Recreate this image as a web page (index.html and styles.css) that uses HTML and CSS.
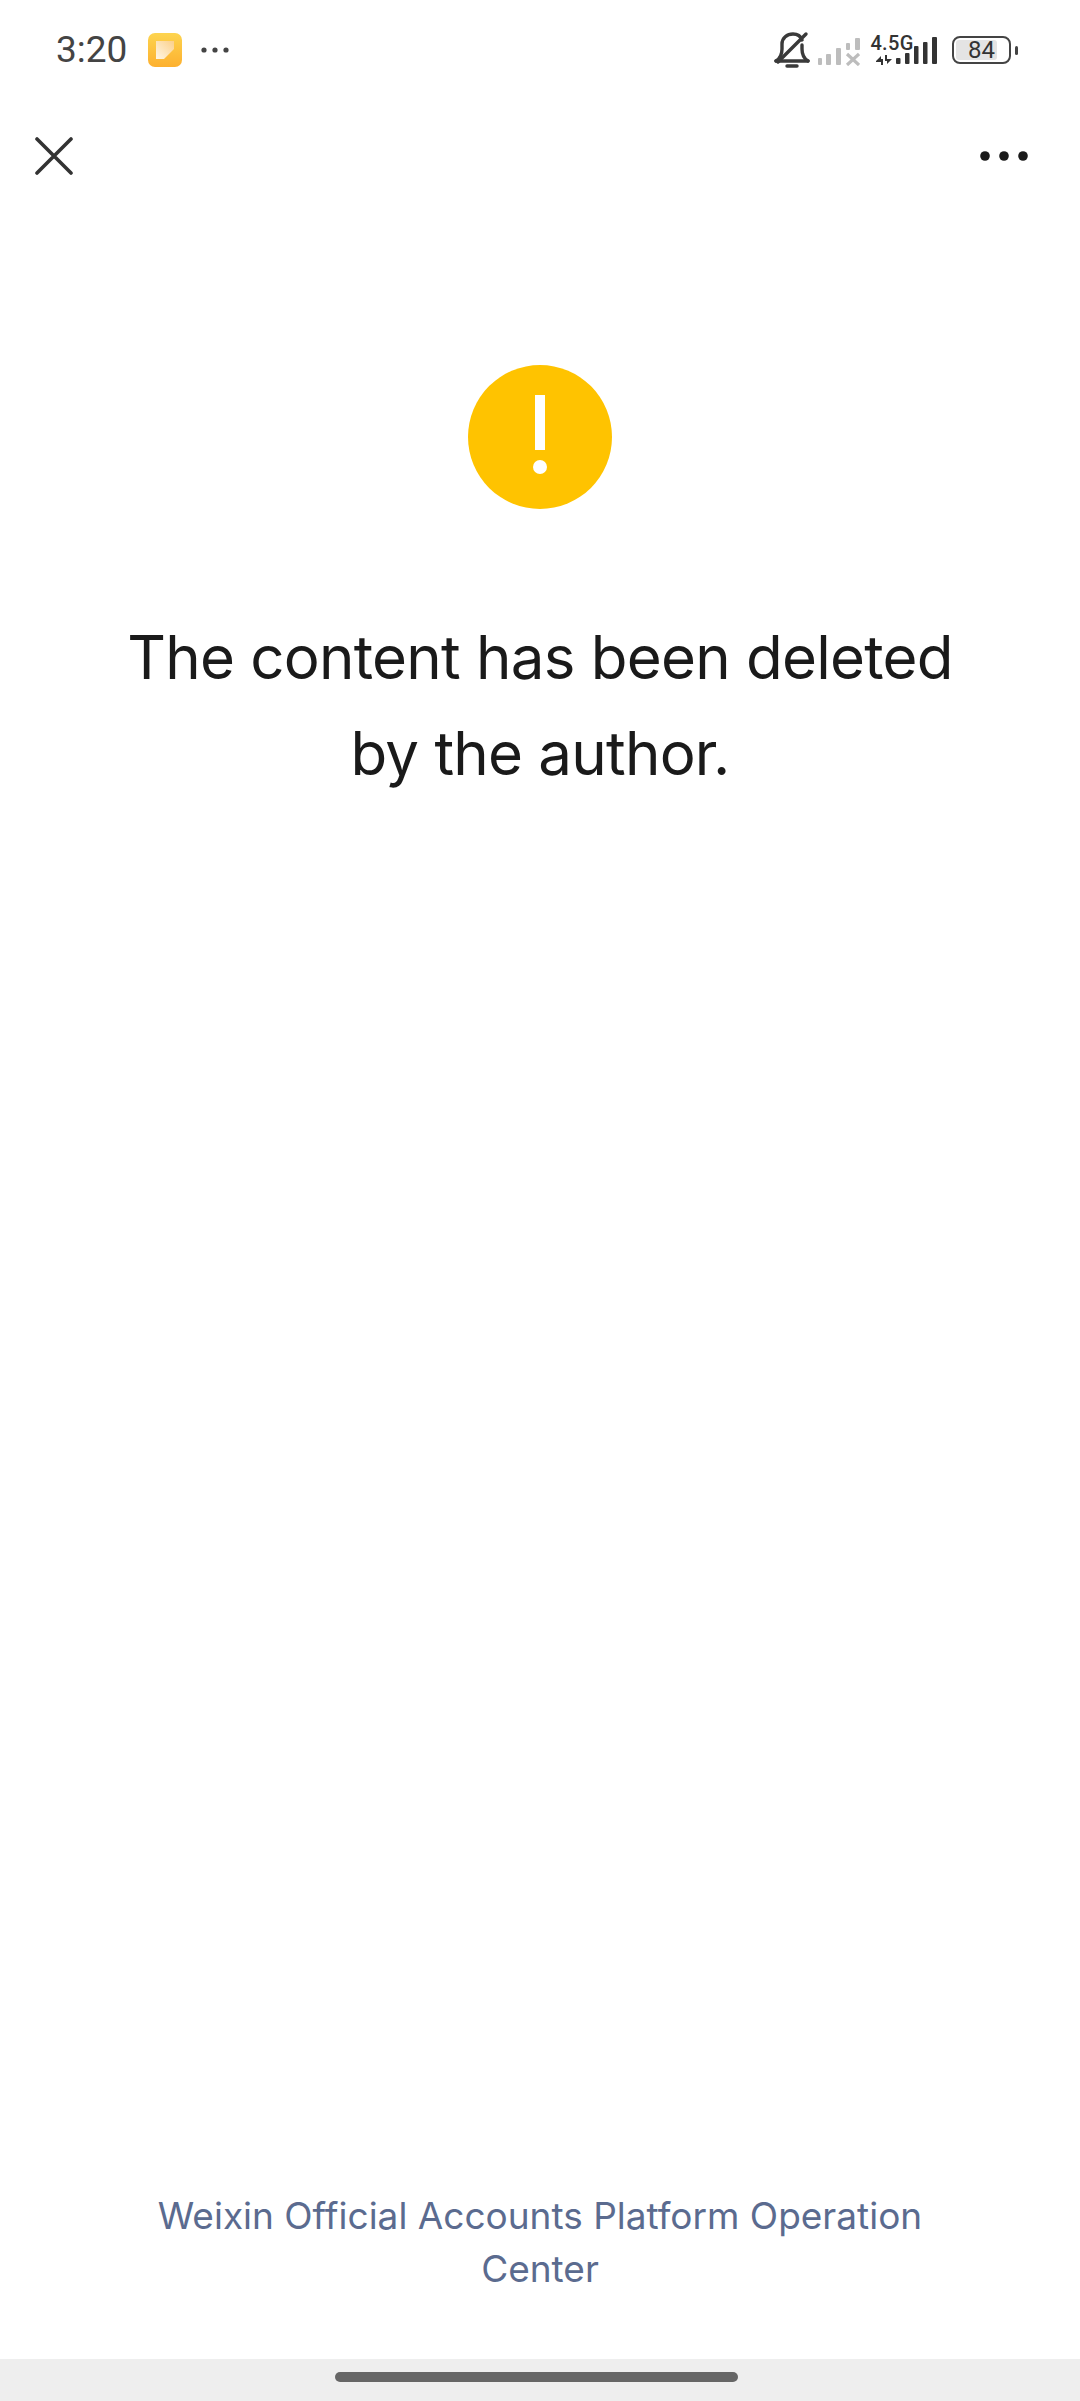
FILE: index.html
```html
<!DOCTYPE html>
<html lang="en">
<head>
<meta charset="utf-8">
<title>Content deleted</title>
<link rel="stylesheet" href="styles.css">
</head>
<body>
<div class="page">
  <header class="status">
    <div class="status-left">
      <span class="time">3:20</span>
      <svg class="app-icon" width="36" height="36" viewBox="0 0 36 36">
        <defs>
          <linearGradient id="appg" x1="0" y1="0" x2="0" y2="1">
            <stop offset="0" stop-color="#fdd44f"/>
            <stop offset="1" stop-color="#fdb02f"/>
          </linearGradient>
          <linearGradient id="noteg" x1="0" y1="1" x2="1" y2="0">
            <stop offset="0" stop-color="#fff6e6"/>
            <stop offset="1" stop-color="#fbd08a"/>
          </linearGradient>
        </defs>
        <rect x="1" y="1" width="34" height="34" rx="7" fill="url(#appg)"/>
        <path d="M9 9H27V17L17 27H9Z" fill="url(#noteg)"/>
      </svg>
      <svg class="more-small" width="28" height="8" viewBox="0 0 28 8">
        <circle cx="3" cy="4" r="2.6"/><circle cx="14" cy="4" r="2.6"/><circle cx="25" cy="4" r="2.6"/>
      </svg>
    </div>
    <div class="status-right">
      <svg class="ic-bell" width="36" height="38" viewBox="0 0 36 38" fill="none" stroke="#3a3a3a" stroke-width="3.4" stroke-linecap="round" stroke-linejoin="round">
        <path d="M2 30H34"/>
        <path d="M2 30C7 27 8 23 8 18V13C8 7 13 3 19 3C24 3 27 6 28 9"/>
        <path d="M28 14V18C28 23 29 27 34 30"/>
        <path d="M4 31L32 3"/>
        <path d="M13 35H23"/>
      </svg>
      <svg class="ic-sig1" width="42" height="28" viewBox="0 0 42 28" fill="#bdbdbd">
        <rect x="0" y="20" width="4" height="7" rx="1"/>
        <rect x="8" y="16" width="5" height="11" rx="1"/>
        <rect x="18" y="10" width="5" height="17" rx="1"/>
        <rect x="28" y="5" width="4" height="7" rx="1"/>
        <rect x="37" y="0" width="5" height="12" rx="1"/>
        <path d="M29 16L41 27M41 16L29 27" stroke="#bdbdbd" stroke-width="3.2" fill="none"/>
      </svg>
      <div class="net">
        <span class="net-label">4.5G</span>
        <svg class="net-arrows" width="16" height="10" viewBox="0 0 16 10" fill="#333">
          <path d="M0 6L5 1V4H7V10H5V7H0Z"/>
          <path d="M9 0H11V4H16L11 9V6H9Z"/>
        </svg>
      </div>
      <svg class="ic-sig2" width="42" height="28" viewBox="0 0 42 28" fill="#333">
        <rect x="0" y="21" width="4.5" height="6" rx="1"/>
        <rect x="9" y="16" width="4.5" height="11" rx="1"/>
        <rect x="18" y="9" width="4.5" height="18" rx="1"/>
        <rect x="27" y="5" width="4.5" height="22" rx="1"/>
        <rect x="36" y="0" width="5" height="27" rx="1"/>
      </svg>
      <div class="battery">
        <div class="battery-body">
          <span class="battery-fill"></span>
          <span class="battery-num">84</span>
        </div>
        <span class="battery-tip"></span>
      </div>
    </div>
  </header>

  <nav class="topnav">
    <svg class="close" width="38" height="38" viewBox="0 0 38 38" fill="none" stroke="#333" stroke-width="3.6" stroke-linecap="round">
      <path d="M2 2L36 36M36 2L2 36"/>
    </svg>
    <svg class="menu" width="48" height="10" viewBox="0 0 48 10" fill="#1a1a1a">
      <circle cx="5" cy="5" r="4.8"/><circle cx="24" cy="5" r="4.8"/><circle cx="43" cy="5" r="4.8"/>
    </svg>
  </nav>

  <main class="content">
    <svg class="warn" width="144" height="144" viewBox="0 0 144 144">
      <circle cx="72" cy="72" r="72" fill="#ffc300"/>
      <rect x="67" y="30" width="10" height="55" fill="#fff"/>
      <circle cx="72" cy="102" r="7" fill="#fff"/>
    </svg>
    <h1 class="title">The content has been deleted by the author.</h1>
  </main>

  <footer class="foot">
    <p class="foot-link">Weixin Official Accounts Platform Operation Center</p>
  </footer>

  <div class="homebar"><span class="home-pill"></span></div>
</div>
</body>
</html>
```

FILE: styles.css
```css
* { box-sizing: border-box; }
html, body { margin: 0; padding: 0; background: #fff; }
.page {
  width: 1080px;
  height: 2401px;
  display: flex;
  flex-direction: column;
  font-family: Inter, "Noto Sans", sans-serif;
  overflow: hidden;
}
.status {
  height: 100px;
  flex: none;
  display: flex;
  align-items: center;
  justify-content: space-between;
  padding: 0 62px 0 56px;
}
.status-left { display: flex; align-items: center; }
.time {
  font-family: Roboto, sans-serif;
  font-size: 37px;
  color: #444;
  line-height: 44px;
  width: 91px;
}
.more-small { fill: #444; margin-left: 18px; }
.status-right { display: flex; align-items: center; }
.ic-bell { margin-right: 8px; }
.ic-sig1 { margin-right: 10px; margin-top: 3px; }
.net {
  width: 44px;
  height: 32px;
  display: flex;
  flex-direction: column;
  align-items: center;
  margin-top: 2px;
}
.net-label {
  font-family: Roboto, sans-serif;
  font-weight: 500;
  font-size: 20px;
  line-height: 17px;
  letter-spacing: 0.3px;
  color: #333;
}
.net-arrows { margin-top: 3px; margin-right: 16px; }
.ic-sig2 { margin-left: -18px; margin-right: 14px; margin-top: 2px; }
.battery { display: flex; align-items: center; }
.battery-body {
  position: relative;
  width: 59px;
  height: 28px;
  border: 2.5px solid #444;
  border-radius: 8px;
  display: flex;
  align-items: center;
  justify-content: center;
}
.battery-fill {
  position: absolute;
  left: 2px;
  top: 2px;
  bottom: 2px;
  width: 41px;
  background: #e4e4e4;
  border-radius: 3px;
}
.battery-num {
  position: relative;
  font-family: Roboto, sans-serif;
  font-size: 24px;
  line-height: 23px;
  color: #333;
}
.battery-tip {
  width: 3px;
  height: 9px;
  background: #444;
  margin-left: 4px;
  border-radius: 1.5px;
}
.topnav {
  height: 112px;
  flex: none;
  display: flex;
  align-items: center;
  justify-content: space-between;
  padding: 0 52px 0 35px;
}
.content {
  display: flex;
  flex-direction: column;
  align-items: center;
  padding: 153px 100px 0;
}
.warn { display: block; }
.title {
  margin: 100px 0 0;
  font-weight: 400;
  font-size: 60px;
  line-height: 96px;
  letter-spacing: -0.75px;
  color: #1a1a1a;
  text-align: center;
}
.foot {
  margin-top: auto;
  padding: 0 150px 64px;
}
.foot-link {
  margin: 0;
  font-size: 37px;
  line-height: 53px;
  color: #5b6b8f;
  text-align: center;
}
.homebar {
  height: 42px;
  flex: none;
  background: #eee;
  display: flex;
  justify-content: center;
  padding: 13px 7px 0 0;
}
.home-pill {
  width: 403px;
  height: 10px;
  border-radius: 5px;
  background: #666;
}
```
